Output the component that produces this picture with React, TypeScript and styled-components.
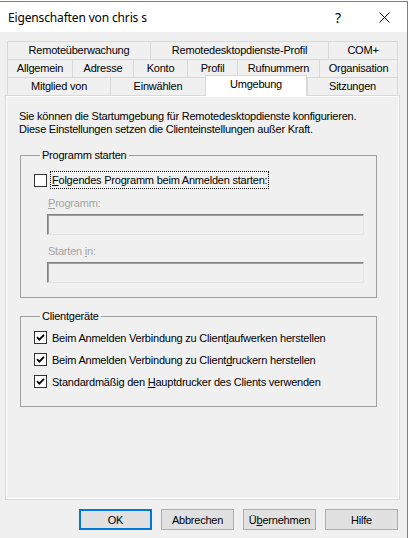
import React from 'react';
import styled, { createGlobalStyle, css } from 'styled-components';

const GlobalStyle = createGlobalStyle`
  html, body {
    margin: 0;
    padding: 0;
    background: #fff;
  }
  body {
    font-family: "Liberation Sans", Arial, sans-serif;
    font-size: 11px;
    letter-spacing: -0.22px;
    color: #000;
  }
`;

const Window = styled.div`
  box-sizing: border-box;
  width: 408px;
  height: 537px;
  margin-top: 1px;
  border-top: 1px solid #7f7f7f;
  border-right: 1px solid #7f7f7f;
  background: #f0f0f0;
  display: flex;
  flex-direction: column;
`;

const TitleBar = styled.div`
  height: 30px;
  background: #fff;
  display: flex;
  align-items: center;
  padding-left: 8px;
`;

const TitleText = styled.div`
  flex: 1;
  font-family: "Noto Sans", "Open Sans", sans-serif;
  font-size: 12px;
  letter-spacing: -0.15px;
`;

const CaptionButton = styled.div`
  width: 46px;
  height: 30px;
  display: flex;
  align-items: center;
  justify-content: center;
  font-family: "Noto Sans", sans-serif;
  font-size: 14px;
`;

const Body = styled.div`
  flex: 1;
  display: flex;
  flex-direction: column;
  padding: 9px 7px 0 5px;
`;

const TabStrip = styled.div`
  width: 391px;
  margin-left: 2px;
  display: flex;
  flex-direction: column;
`;

const TabRow = styled.div`
  display: flex;
  height: 18px;
`;

const Tab = styled.div<{ $w: number; $active?: boolean }>`
  box-sizing: border-box;
  width: ${(p) => p.$w}px;
  height: 18px;
  border-top: 1px solid #d9d9d9;
  border-left: 1px solid #d9d9d9;
  background: #f0f0f0;
  text-align: center;
  line-height: 17px;
  white-space: nowrap;

  &:last-child {
    border-right: 1px solid #d9d9d9;
  }

  ${(p) =>
    p.$active &&
    css`
      position: relative;
      z-index: 1;
      height: 21px;
      margin-top: -2px;
      margin-bottom: -1px;
      background: #fff;
      border-right: 1px solid #d9d9d9;
      line-height: 16px;
    `}
`;

const Panel = styled.div`
  box-sizing: border-box;
  width: 395px;
  height: 405px;
  border: 1px solid #d9d9d9;
  box-shadow: inset 0 0 0 1px #fff;
  padding: 14px 0 0 14px;
  display: flex;
  flex-direction: column;
`;

const Description = styled.p`
  margin: 0 0 0 -1px;
  line-height: 13px;
`;

const Group = styled.fieldset<{ $top: number }>`
  box-sizing: border-box;
  width: 357px;
  min-inline-size: 0;
  margin: ${(p) => p.$top}px 0 0 0;
  padding: 0 12px 14px 13px;
  border: 1px solid #a0a0a0;
  display: flex;
  flex-direction: column;
`;

const Legend = styled.legend`
  margin-left: 6px;
  padding: 0 2px;
  line-height: 13px;
`;

const CheckRow = styled.div<{ $h: number; $top: number }>`
  display: flex;
  align-items: center;
  height: ${(p) => p.$h}px;
  margin-top: ${(p) => p.$top}px;
`;

const Box = styled.span`
  box-sizing: border-box;
  width: 13px;
  height: 13px;
  border: 1px solid #333;
  background: #fff;
  margin-right: 3px;
  display: flex;
  align-items: center;
  justify-content: center;
`;

const CheckLabel = styled.span<{ $focus?: boolean }>`
  padding: 0 1px;
  line-height: 16px;
  border: 1px solid transparent;
  ${(p) =>
    p.$focus &&
    css`
      border: 1px dotted #000;
    `}
`;

const Key = styled.span`
  text-decoration: underline;
`;

const FieldLabel = styled.div<{ $top: number }>`
  margin: ${(p) => p.$top}px 0 0 14px;
  line-height: 13px;
  color: #a3a3a3;
`;

const TextBox = styled.div`
  box-sizing: border-box;
  width: 317px;
  height: 21px;
  margin: 4px 0 0 13px;
  background: #f0f0f0;
  border: 1px solid;
  border-color: #838383 #e3e3e3 #e3e3e3 #838383;
  box-shadow: inset 1px 1px 0 #a0a0a0;
`;

const ButtonBar = styled.div`
  display: flex;
  justify-content: flex-end;
  gap: 9px;
  margin-top: 9px;
  padding-right: 2px;
`;

const Button = styled.button<{ $default?: boolean }>`
  box-sizing: border-box;
  width: 73px;
  height: 21px;
  padding: 0;
  background: #e1e1e1;
  border: 1px solid #adadad;
  font-family: "Liberation Sans", Arial, sans-serif;
  font-size: 11px;
  letter-spacing: -0.22px;
  color: #000;
  ${(p) =>
    p.$default &&
    css`
      border-color: #0078d7;
      box-shadow: inset 0 0 0 1px #0078d7;
    `}
`;

const CheckMark = () => (
  <svg width="9" height="9" viewBox="0 0 9 9">
    <path d="M1 4.2 L3.3 6.6 L8 1.8" fill="none" stroke="#000" strokeWidth="1.8" />
  </svg>
);

const CloseIcon = () => (
  <svg width="11" height="11" viewBox="0 0 11 11">
    <path d="M0.5 0.5 L10.5 10.5 M10.5 0.5 L0.5 10.5" stroke="#000" strokeWidth="1" />
  </svg>
);

const tabRows: [string, number][][] = [
  [
    ['Remoteüberwachung', 143],
    ['Remotedesktopdienste-Profil', 178],
    ['COM+', 70],
  ],
  [
    ['Allgemein', 65],
    ['Adresse', 61],
    ['Konto', 54],
    ['Profil', 50],
    ['Rufnummern', 82],
    ['Organisation', 79],
  ],
  [
    ['Mitglied von', 103],
    ['Einwählen', 95],
    ['Umgebung', 102],
    ['Sitzungen', 91],
  ],
];

const App: React.FC = () => {
  return (
    <>
      <GlobalStyle />
      <Window>
        <TitleBar>
          <TitleText>Eigenschaften von chris s</TitleText>
          <CaptionButton>?</CaptionButton>
          <CaptionButton>
            <CloseIcon />
          </CaptionButton>
        </TitleBar>

        <Body>
          <TabStrip>
            {tabRows.map((row, i) => (
              <TabRow key={i}>
                {row.map(([label, w]) => (
                  <Tab key={label} $w={w} $active={label === 'Umgebung'}>
                    {label}
                  </Tab>
                ))}
              </TabRow>
            ))}
          </TabStrip>

          <Panel>
            <Description>
              Sie können die Startumgebung für Remotedesktopdienste konfigurieren.
              <br />
              Diese Einstellungen setzen die Clienteinstellungen außer Kraft.
            </Description>

            <Group $top={13}>
              <Legend>Programm starten</Legend>
              <CheckRow $h={18} $top={9}>
                <Box />
                <CheckLabel $focus>
                  <Key>F</Key>olgendes Programm beim Anmelden starten:
                </CheckLabel>
              </CheckRow>
              <FieldLabel $top={8}>
                <Key>P</Key>rogramm:
              </FieldLabel>
              <TextBox />
              <FieldLabel $top={10}>
                Starten <Key>i</Key>n:
              </FieldLabel>
              <TextBox />
            </Group>

            <Group $top={12}>
              <Legend>Clientgeräte</Legend>
              <CheckRow $h={21} $top={4}>
                <Box>
                  <CheckMark />
                </Box>
                <CheckLabel>
                  Beim Anmelden Verbindung zu Client<Key>l</Key>aufwerken herstellen
                </CheckLabel>
              </CheckRow>
              <CheckRow $h={21} $top={1}>
                <Box>
                  <CheckMark />
                </Box>
                <CheckLabel>
                  Beim Anmelden Verbindung zu Client<Key>d</Key>ruckern herstellen
                </CheckLabel>
              </CheckRow>
              <CheckRow $h={21} $top={1}>
                <Box>
                  <CheckMark />
                </Box>
                <CheckLabel>
                  Standardmäßig den <Key>H</Key>auptdrucker des Clients verwenden
                </CheckLabel>
              </CheckRow>
            </Group>
          </Panel>

          <ButtonBar>
            <Button $default>OK</Button>
            <Button>Abbrechen</Button>
            <Button>
              Ü<Key>b</Key>ernehmen
            </Button>
            <Button>Hilfe</Button>
          </ButtonBar>
        </Body>
      </Window>
    </>
  );
};

export default App;
